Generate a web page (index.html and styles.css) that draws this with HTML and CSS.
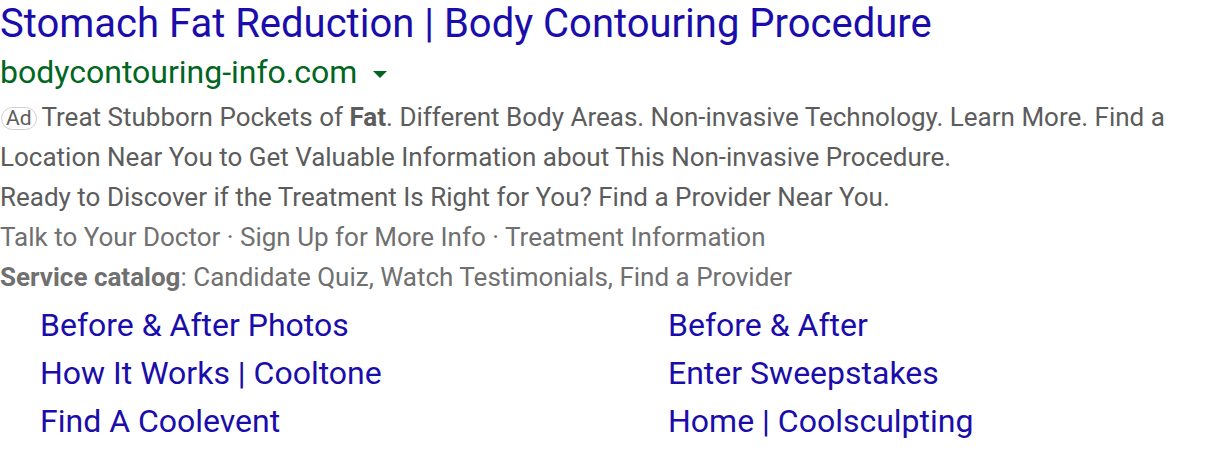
FILE: index.html
```html
<!DOCTYPE html>
<html>
<head>
<meta charset="utf-8">
<link rel="stylesheet" href="styles.css">
</head>
<body>
<div class="ad">
  <div class="title">Stomach Fat Reduction | Body Contouring Procedure</div>
  <div class="url">bodycontouring-info.com <span class="caret"></span></div>
  <div class="desc"><span class="badge">Ad</span> Treat Stubborn Pockets of <b>Fat</b>. Different Body Areas. Non-invasive Technology. Learn More. Find a Location Near You to Get Valuable Information about This Non-invasive Procedure.</div>
  <div class="desc">Ready to Discover if the Treatment Is Right for You? Find a Provider Near You.</div>
  <div class="desc light">Talk to Your Doctor · Sign Up for More Info · Treatment Information</div>
  <div class="desc light"><b>Service catalog</b>: Candidate Quiz, Watch Testimonials, Find a Provider</div>
  <div class="sitelinks">
    <a>Before &amp; After Photos</a>
    <a>Before &amp; After</a>
    <a>How It Works | Cooltone</a>
    <a>Enter Sweepstakes</a>
    <a>Find A Coolevent</a>
    <a>Home | Coolsculpting</a>
  </div>
</div>
</body>
</html>
```
FILE: styles.css
```css
html, body { margin: 0; padding: 0; background: #fff; }
body { font-family: Roboto, "Liberation Sans", sans-serif; }
.ad { width: 1180px; }
.title { color: #1a0dab; font-size: 40px; line-height: 48px; }
.url { color: #006621; font-size: 32px; line-height: 49px; display: flex; align-items: center; gap: 16px; }
.caret { width: 0; height: 0; border-left: 7px solid transparent; border-right: 7px solid transparent; border-top: 7px solid #006621; margin-top: 4px; }
.desc { color: #5c5c5c; font-size: 26px; line-height: 40px; }
.desc.light { color: #707070; }
.desc b { font-weight: bold; }
.badge { display: inline-block; font-size: 21px; line-height: 21px; padding: 0 4px; border: 1px solid #d0d0d0; border-radius: 12px; color: #5c5c5c; vertical-align: 1px; margin-left: 1px; margin-right: -1px; }
.sitelinks { display: grid; grid-template-columns: 628px auto; padding-left: 40px; margin-top: 4px; }
.sitelinks a { color: #1a0dab; font-size: 32px; line-height: 48px; }
```
